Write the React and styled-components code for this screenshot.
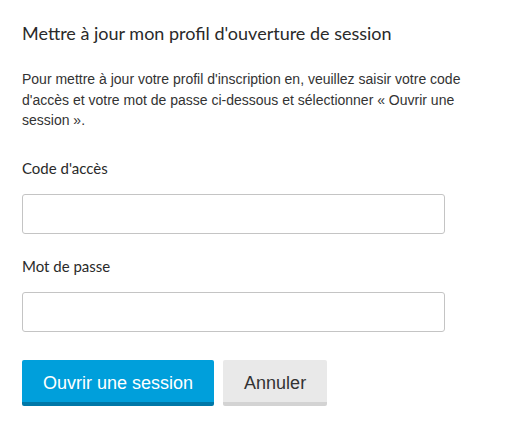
import React from "react";
import styled, { createGlobalStyle } from "styled-components";

const Global = createGlobalStyle`
  html, body { margin: 0; padding: 0; background: #fff; }
  body { font-family: "Liberation Sans", Arial, sans-serif; color: #333; }
`;

const Page = styled.form`
  padding: 22px 22px 0 22px;
  width: 461px;
  box-sizing: border-box;
  display: flex;
  flex-direction: column;
`;

const Title = styled.h1`
  margin: 0;
  font-family: Lato, "Liberation Sans", sans-serif;
  font-weight: 400;
  font-size: 18px;
  line-height: 22px;
  color: #2a2a2a;
`;

const Intro = styled.p`
  margin: 25px 0 0;
  width: 461px;
  font-size: 14px;
  line-height: 20.5px;
  color: #333;
`;

const Label = styled.label`
  display: block;
  margin: ${p => p.$top}px 0 0;
  font-family: Lato, "Liberation Sans", sans-serif;
  font-size: 15px;
  line-height: 18px;
  color: #2a2a2a;
`;

const Field = styled.input`
  display: block;
  box-sizing: border-box;
  margin-top: 17px;
  width: 423px;
  height: 40px;
  border: 1px solid #c4c4c4;
  border-radius: 3px;
  background: #fff;
  padding: 0 10px;
  font-size: 14px;
  outline: none;
`;

const Actions = styled.div`
  display: flex;
  gap: 9px;
  margin-top: 28px;
`;

const Button = styled.button`
  box-sizing: border-box;
  height: 46px;
  padding: 4px ${p => p.$pad}px 0;
  border: none;
  border-radius: 2px;
  border-bottom: 4px solid ${p => (p.$primary ? "#0078a8" : "#d3d3d3")};
  background: ${p => (p.$primary ? "#009fdb" : "#e9e9e9")};
  color: ${p => (p.$primary ? "#fff" : "#333")};
  font-family: "Liberation Sans", Arial, sans-serif;
  font-size: 18px;
  line-height: 20px;
  cursor: pointer;
`;

export default function App() {
  return (
    <>
      <Global />
      <Page onSubmit={e => e.preventDefault()}>
        <Title>Mettre à jour mon profil d'ouverture de session</Title>
        <Intro>
          Pour mettre à jour votre profil d'inscription en, veuillez saisir votre code
          d'accès et votre mot de passe ci-dessous et sélectionner « Ouvrir une
          session ».
        </Intro>
        <Label $top={28} htmlFor="code">Code d'accès</Label>
        <Field id="code" type="text" />
        <Label $top={23} htmlFor="pwd">Mot de passe</Label>
        <Field id="pwd" type="password" />
        <Actions>
          <Button type="submit" $primary $pad={21}>Ouvrir une session</Button>
          <Button type="button" $pad={21}>Annuler</Button>
        </Actions>
      </Page>
    </>
  );
}
